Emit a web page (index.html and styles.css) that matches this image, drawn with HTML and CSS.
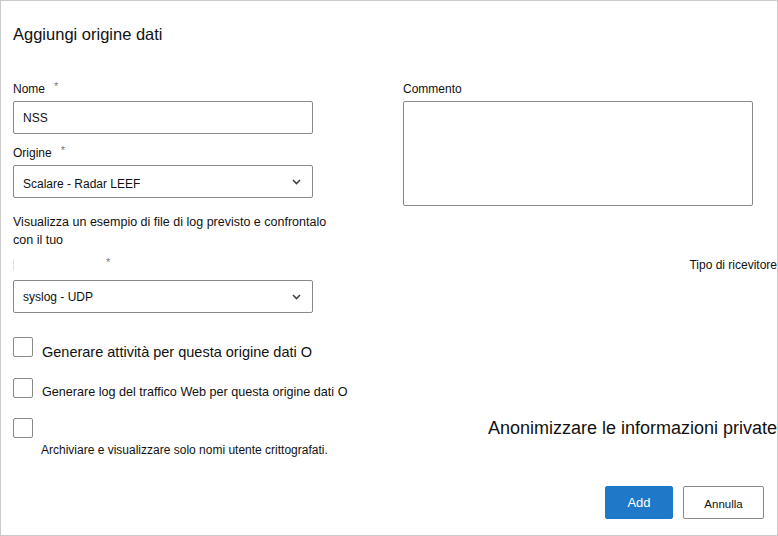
FILE: index.html
```html
<!DOCTYPE html>
<html lang="it">
<head>
<meta charset="utf-8">
<title>Aggiungi origine dati</title>
<link rel="stylesheet" href="styles.css">
</head>
<body>
<div class="dialog">
  <h1 class="title">Aggiungi origine dati</h1>

  <div class="top-grid">
    <div class="col">
      <div class="label">Nome<span class="req">*</span></div>
      <div class="field">NSS</div>
      <div class="label label-gap">Origine<span class="req">*</span></div>
      <div class="field select">
        <span class="select-text low">Scalare - Radar LEEF</span>
        <svg class="chev" width="9" height="6" viewBox="0 0 9 6"><polyline points="1,1 4.5,4.5 8,1" fill="none" stroke="#444" stroke-width="1.6"/></svg>
      </div>
    </div>
    <div class="col">
      <div class="label">Commento</div>
      <div class="textarea"></div>
    </div>
  </div>

  <p class="hint">Visualizza un esempio di file di log previsto e confrontalo con il tuo</p>

  <div class="recv-row">
    <div class="recv-left"><span class="ghost"></span><span class="req">*</span></div>
    <div class="recv-right">Tipo di ricevitore</div>
  </div>

  <div class="field select select-2">
    <span class="select-text">syslog - UDP</span>
    <svg class="chev" width="9" height="6" viewBox="0 0 9 6"><polyline points="1,1 4.5,4.5 8,1" fill="none" stroke="#444" stroke-width="1.6"/></svg>
  </div>

  <div class="cb-row row-1">
    <span class="cb"></span>
    <span class="cb-text t1">Generare attività per questa origine dati O</span>
  </div>
  <div class="cb-row row-2">
    <span class="cb"></span>
    <span class="cb-text t2">Generare log del traffico Web per questa origine dati O</span>
  </div>
  <div class="cb-row row-3">
    <span class="cb"></span>
    <span class="anon">Anonimizzare le informazioni private</span>
  </div>
  <div class="cb-desc">Archiviare e visualizzare solo nomi utente crittografati.</div>

  <div class="actions">
    <button class="btn btn-primary">Add</button>
    <button class="btn btn-secondary">Annulla</button>
  </div>
</div>
</body>
</html>
```

FILE: styles.css
```css
html, body {
  margin: 0;
  padding: 0;
  background: #fff;
}

body {
  font-family: "Liberation Sans", Arial, sans-serif;
  color: #111;
}

.dialog {
  width: 778px;
  height: 536px;
  box-sizing: border-box;
  border: 1px solid #cbcbcb;
  padding: 0 0 0 12px;
  overflow: hidden;
}

.title {
  margin: 23px 0 0;
  font-size: 16.5px;
  line-height: 20px;
  font-weight: normal;
  color: #111;
}

.top-grid {
  display: grid;
  grid-template-columns: 300px 350px;
  column-gap: 90px;
  margin-top: 37px;
}

.label {
  font-size: 12px;
  line-height: 16px;
  height: 16px;
}

.label-gap {
  margin-top: 11px;
}

.req {
  color: #7a7a7a;
  font-size: 11px;
  line-height: 0;
  margin-left: 9px;
  vertical-align: 3px;
}

.field {
  box-sizing: border-box;
  width: 300px;
  height: 33px;
  margin-top: 4px;
  padding: 0 9px;
  border: 1px solid #8a8a8a;
  border-radius: 2px;
  display: flex;
  align-items: center;
  font-size: 12px;
  line-height: 16px;
  color: #111;
}

.select {
  justify-content: space-between;
  padding-right: 11px;
}

.select-text.low {
  padding-top: 5px;
}

.chev {
  display: block;
  flex: none;
}

.textarea {
  box-sizing: border-box;
  width: 350px;
  height: 105px;
  margin-top: 4px;
  border: 1px solid #8a8a8a;
  border-radius: 2px;
}

.hint {
  margin: 7px 0 0;
  width: 320px;
  font-size: 12.5px;
  line-height: 18px;
}

.recv-row {
  display: flex;
  justify-content: space-between;
  align-items: center;
  height: 16px;
  margin-top: 8px;
  font-size: 12px;
  line-height: 16px;
}

.recv-left {
  display: flex;
  align-items: center;
}

.ghost {
  display: inline-block;
  width: 84px;
  height: 12px;
  border-left: 1px solid #e2e2e2;
  box-sizing: border-box;
}

.recv-left .req {
  line-height: 16px;
  margin-top: -6px;
}

.select-2 {
  margin-top: 7px;
}

.cb-row {
  display: flex;
  align-items: flex-start;
  height: 20px;
}

.row-1 { margin-top: 24px; }
.row-2 { margin-top: 21px; }
.row-3 { margin-top: 20px; }

.cb {
  flex: none;
  width: 20px;
  height: 20px;
  box-sizing: border-box;
  border: 1px solid #8a8a8a;
  border-radius: 2px;
  background: #fff;
}

.cb-text {
  margin-left: 9px;
  white-space: nowrap;
}

.t1 {
  font-size: 14.5px;
  line-height: 20px;
  margin-top: 5px;
}

.t2 {
  font-size: 12.6px;
  line-height: 18px;
  margin-top: 4.5px;
}

.anon {
  margin-left: auto;
  margin-top: -1px;
  font-size: 18px;
  line-height: 22px;
  white-space: nowrap;
}

.cb-desc {
  margin: 4px 0 0 28px;
  font-size: 12px;
  line-height: 16px;
}

.actions {
  display: flex;
  justify-content: flex-end;
  gap: 10px;
  margin-top: 28px;
  padding-right: 13px;
}

.btn {
  box-sizing: border-box;
  height: 33px;
  border-radius: 2px;
  font-family: "Liberation Sans", Arial, sans-serif;
  display: flex;
  align-items: center;
  justify-content: center;
  padding: 0;
  margin: 0;
}

.btn-primary {
  width: 68px;
  background: #1f78c8;
  border: 1px solid #1f78c8;
  color: #fff;
  font-size: 13px;
}

.btn-secondary {
  width: 81px;
  background: #fff;
  border: 1px solid #8a8a8a;
  color: #111;
  font-size: 11.5px;
  padding-top: 3px;
}
```
